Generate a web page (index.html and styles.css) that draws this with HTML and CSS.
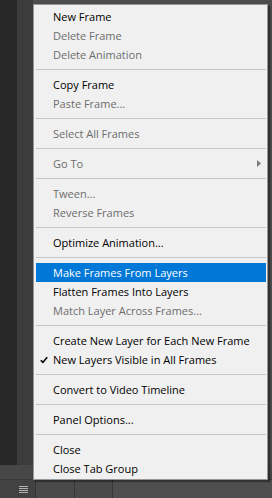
FILE: index.html
```html
<!DOCTYPE html>
<html lang="en">
<head>
	<meta charset="UTF-8">
	<title>Timeline panel menu</title>
	<link rel="stylesheet" href="styles.css">
</head>
<body>
	<div class="app">
		<div class="workspace">
			<div class="col-dark"></div>
			<div class="col-mid"></div>
			<div class="rest">
				<div class="thumbs-top"><span class="thumb"></span></div>
			</div>
		</div>
		<div class="strip"></div>
		<div class="bottombar">
			<span class="burger"><i></i><i></i><i></i><i></i></span>
			<span class="cell"></span>
			<span class="cell"></span>
			<span class="cell olive"></span>
		</div>
	</div>

	<!-- the flyout menu sits over the panel -->
	<ul class="menu">
		<li class="item">New Frame</li>
		<li class="item off">Delete Frame</li>
		<li class="item off">Delete Animation</li>
		<li class="sep"></li>
		<li class="item">Copy Frame</li>
		<li class="item off">Paste Frame...</li>
		<li class="sep"></li>
		<li class="item off">Select All Frames</li>
		<li class="sep"></li>
		<li class="item off">Go To
			<svg class="arrow" width="4" height="7" viewBox="0 0 4 7"><path d="M0 0L4 3.5L0 7Z" fill="#7b7b7b"/></svg>
		</li>
		<li class="sep"></li>
		<li class="item off">Tween...</li>
		<li class="item off">Reverse Frames</li>
		<li class="sep"></li>
		<li class="item">Optimize Animation...</li>
		<li class="sep"></li>
		<li class="item hot">Make Frames From Layers</li>
		<li class="item">Flatten Frames Into Layers</li>
		<li class="item off">Match Layer Across Frames...</li>
		<li class="sep"></li>
		<li class="item">Create New Layer for Each New Frame</li>
		<li class="item">
			<svg class="check" width="8" height="8" viewBox="0 0 8 8"><path d="M0.8 4.2L2.9 6.4L7.2 1.2" fill="none" stroke="#000" stroke-width="1.6"/></svg>
			New Layers Visible in All Frames</li>
		<li class="sep"></li>
		<li class="item">Convert to Video Timeline</li>
		<li class="sep"></li>
		<li class="item">Panel Options...</li>
		<li class="sep"></li>
		<li class="item">Close</li>
		<li class="item">Close Tab Group</li>
	</ul>
</body>
</html>
```

FILE: styles.css
```css
html, body {
	margin: 0;
	padding: 0;
}
body {
	width: 272px;
	height: 498px;
	overflow: hidden;
	background: #535353;
	font-family: "Open Sans", "Liberation Sans", sans-serif;
	font-size: 11px;
	position: relative;
}
.app {/*the panel behind the menu*/
	display: flex;
	flex-direction: column;
	height: 498px;
}
.workspace {
	flex: 1;
	display: flex;
}
.col-dark {
	width: 17px;
	background: #282828;
}
.col-mid {
	width: 16px;
	background: #3c3c3c;
}
.rest {
	flex: 1;
	background: #4c4c4c;
}
.thumbs-top {
	padding-left: 72px;
	height: 4px;
}
.thumb {
	display: inline-block;
	width: 60px;
	height: 4px;
	background: #2f2f26;
}
.strip {
	height: 14px;
	background: #474747;
}
.bottombar {
	height: 18px;
	display: flex;
	align-items: center;
	background: #424242;
	border-top: 1px solid #3a3a3a;
}
.burger {
	display: flex;
	flex-direction: column;
	gap: 1px;
	width: 9px;
	margin: 0 7px 0 19px;
}
.burger i {
	display: block;
	height: 1px;
	background: #b4b4b4;
}
.cell {
	width: 38px;
	height: 18px;
	border-left: 1px solid #363636;
	background: #4a4a4a;
}
.cell.olive {
	width: 160px;
	background: #4f4f4f;
}

.menu {/*flyout menu*/
	position: absolute;
	left: 33px;
	top: 4px;
	width: 233px;
	margin: 0;
	padding: 2px 0 1px 0;
	list-style: none;
	background: #f0f0f0;
	border: 1px solid #979797;
	box-shadow: 2px 2px 1px rgba(0, 0, 0, 0.35);
}
.item {
	position: relative;
	height: 19px;
	line-height: 19px;
	padding-left: 17px;
	margin: 0 1px 0 2px;
	color: #000;
	white-space: nowrap;
}
.off {
	color: #6d6d6d;
}
.hot {
	background: #0078d7;
	color: #fff;
}
.sep {
	height: 1px;
	margin: 5px 1px 5px 2px;
	background: #c6c6c6;
}
.arrow {
	position: absolute;
	right: 5px;
	top: 6px;
}
.check {
	position: absolute;
	left: 4px;
	top: 6px;
}
```
